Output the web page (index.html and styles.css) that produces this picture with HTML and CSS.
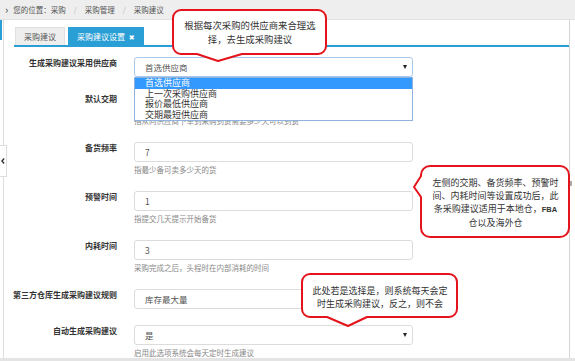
FILE: index.html
```html
<!DOCTYPE html>
<html lang="zh-CN">
<head>
<meta charset="UTF-8">
<meta name="viewport" content="width=device-width, initial-scale=1.0">
<title>采购建议设置</title>
<link rel="stylesheet" href="styles.css">
</head>
<body>

<div class="crumbs">
  <span class="crumb-arrow">›</span>
  <span>您的位置：</span><span>采购</span><span class="sep">/</span><span>采购管理</span><span class="sep">/</span><span>采购建议</span>
</div>

<div class="main">
  <div class="side"><div class="side-mark"></div></div>
  <div class="panel">
    <div class="tabs">
      <div class="tab">采购建议</div>
      <div class="tab tab-active">采购建议设置 <span class="tab-close">✖</span></div>
    </div>

    <div class="form">
      <div class="row">
        <div class="label">生成采购建议采用供应商</div>
        <div class="field field-open">
          <div class="control select focused">首选供应商<span class="caret"></span></div>
          <ul class="dropdown">
            <li class="selected">首选供应商</li>
            <li>上一次采购供应商</li>
            <li>报价最低供应商</li>
            <li>交期最短供应商</li>
          </ul>
        </div>
      </div>
      <div class="row">
        <div class="label">默认交期</div>
        <div class="field">
          <div class="control">15</div>
          <div class="help">指从向供应商下单到采购到货需要多少天可以到货</div>
        </div>
      </div>
      <div class="row">
        <div class="label">备货频率</div>
        <div class="field">
          <div class="control">7</div>
          <div class="help">指最少备可卖多少天的货</div>
        </div>
      </div>
      <div class="row">
        <div class="label">预警时间</div>
        <div class="field">
          <div class="control">1</div>
          <div class="help">指提交几天提示开始备货</div>
        </div>
      </div>
      <div class="row">
        <div class="label">内耗时间</div>
        <div class="field">
          <div class="control">3</div>
          <div class="help">采购完成之后，头程时在内部消耗的时间</div>
        </div>
      </div>
      <div class="row">
        <div class="label">第三方仓库生成采购建议规则</div>
        <div class="field">
          <div class="control select">库存最大量<span class="caret"></span></div>
        </div>
      </div>
      <div class="row">
        <div class="label">自动生成采购建议</div>
        <div class="field">
          <div class="control select">是<span class="caret"></span></div>
          <div class="help">启用此选项系统会每天定时生成建议</div>
        </div>
      </div>
    </div>
  </div>
</div>
<div class="footer-bar"></div>

<!-- 侧栏收起按钮 -->
<div class="collapse">
  <svg width="4" height="6" viewBox="0 0 4 6"><polyline points="3.2,0.6 0.9,3 3.2,5.4" fill="none" stroke="#333" stroke-width="1.4"/></svg>
</div>
<div class="scroll-mark"></div>

<!-- 说明气泡 -->
<div class="callout callout-top">
  <svg class="callout-shape" width="158" height="56" viewBox="0 0 158 56">
    <path d="M10,2 H147 A8,8 0 0 1 155,10 V38 A8,8 0 0 1 147,46 H71 L47,53 L26,46 H10 A8,8 0 0 1 2,38 V10 A8,8 0 0 1 10,2 Z"/>
  </svg>
  <div class="callout-text"><p>根据每次采购的供应商来合理选<br>择，去生成采购建议</p></div>
</div>

<div class="callout callout-right">
  <svg class="callout-shape" width="160" height="76" viewBox="0 0 160 76">
    <path d="M18,2 H148 A9,9 0 0 1 157,11 V64 A9,9 0 0 1 148,73 H18 A9,9 0 0 1 9,64 V33 L2,23 L9,12 V11 A9,9 0 0 1 18,2 Z"/>
  </svg>
  <div class="callout-text"><p>左侧的交期、备货频率、预警时<br>间、内耗时间等设置成功后，此<br>条采购建议适用于本地仓，<span class="latin">FBA</span><br>仓以及海外仓</p></div>
</div>

<div class="callout callout-bottom">
  <svg class="callout-shape" width="160" height="57" viewBox="0 0 160 57">
    <path d="M10,2 H149 A8,8 0 0 1 157,10 V37 A8,8 0 0 1 149,45 H67 L48,54 L27,45 H10 A8,8 0 0 1 2,37 V10 A8,8 0 0 1 10,2 Z"/>
  </svg>
  <div class="callout-text"><p>此处若是选择是，则系统每天会定<br>时生成采购建议，反之，则不会</p></div>
</div>

</body>
</html>
```

FILE: styles.css
```css
html, body {
  overflow: hidden;
}
body {
  margin: 0;
  width: 575px;
  height: 361px;
  position: relative;
  font-family: "Noto Sans CJK SC", "Noto Sans", sans-serif;
  background: #fff;
  color: #333;
}

/* 顶部位置栏 */
.crumbs {
  height: 19px;
  border-bottom: 1px solid #e2e2e2;
  background: #eeeeee;
  display: flex;
  align-items: center;
  padding-left: 5px;
  font-size: 7.5px;
  color: #555;
}
.crumb-arrow {
  font-size: 11px;
  line-height: 1;
  margin-right: 5px;
  color: #444;
}
.crumbs .sep {
  padding: 0 8px;
  color: #bbb;
}

.main {
  display: flex;
  height: 338px;
}
.side {
  width: 3px;
  border-right: 1px solid #dedede;
}
.side-mark {
  width: 2px;
  height: 20px;
  background: #2a9fd6;
}
.panel {
  width: 565px;
  border-right: 1px solid #d6d6d6;
}
.footer-bar {
  height: 3px;
  background: #e4e4e4;
}

/* 标签页 */
.tabs {
  display: flex;
  gap: 3px;
  margin: 7px 0 0 10px;
  padding-left: 1px;
  border-bottom: 2px solid #2a9fd6;
}
.tab {
  height: 18px;
  box-sizing: border-box;
  padding: 0 8px;
  line-height: 17px;
  font-size: 8px;
  color: #555;
  background: #eeeeee;
  border: 1px solid #e0e0e0;
  border-bottom: none;
}
.tab-active {
  background: #2a9fd6;
  border-color: #2a9fd6;
  color: #fff;
}
.tab-close {
  font-family: "DejaVu Sans", sans-serif;
  font-size: 7px;
  margin-left: 2px;
}

/* 表单 */
.form {
  display: flex;
  flex-direction: column;
  gap: 16px;
  padding-top: 10px;
}
.row {
  display: grid;
  grid-template-columns: 113px 279px;
  column-gap: 17px;
}
.label {
  text-align: right;
  font-size: 8px;
  font-weight: bold;
  line-height: 12px;
  color: #333;
}
.field {
  position: relative;
}
.field-open {
  z-index: 5;
}
.control {
  height: 20px;
  box-sizing: border-box;
  border: 1px solid #dcdcdc;
  border-radius: 3px;
  padding: 0 5px 0 10px;
  display: flex;
  align-items: center;
  justify-content: space-between;
  font-size: 8.5px;
  color: #555;
}
.control.focused {
  border-color: #a9c9ec;
}
.caret {
  width: 0;
  height: 0;
  border-left: 2.5px solid transparent;
  border-right: 2.5px solid transparent;
  border-top: 4px solid #222;
}
.help {
  margin-top: 3px;
  font-size: 7.5px;
  line-height: 10px;
  color: #888;
}
.dropdown {  /* 展开的下拉选项 */
  position: absolute;
  top: 20px;
  left: 0;
  right: 0;
  margin: 0;
  padding: 0;
  list-style: none;
  background: #fff;
  border: 1px solid #8fb3de;
  font-size: 9px;
  line-height: 10.5px;
  color: #333;
}
.dropdown li {
  padding-left: 10px;
}
.dropdown li.selected {
  background: #3399ff;
  color: #fff;
}

/* 侧栏收起按钮 */
.collapse {
  position: absolute;
  left: 0;
  top: 145px;
  width: 7px;
  height: 32px;
  box-sizing: border-box;
  background: #fff;
  border: 1px solid #dcdcdc;
  border-left: none;
  display: flex;
  align-items: center;
  justify-content: center;
}
.collapse svg {
  display: block;
}
.scroll-mark {
  position: absolute;
  left: 568px;
  top: 181px;
  width: 4px;
  height: 5px;
  background: #aaa;
}

/* 说明气泡 */
.callout {
  position: absolute;
  z-index: 10;
}
.callout-shape {
  position: absolute;
  left: 0;
  top: 0;
}
.callout-shape path {
  fill: #fff;
  stroke: #e5141c;
  stroke-width: 2;
  stroke-linejoin: round;
}
.callout-text {
  position: relative;
  display: flex;
  align-items: center;
  justify-content: center;
  text-align: center;
  font-size: 9px;
  line-height: 13px;
  color: #333;
}
.callout-text p {
  margin: 0;
}
.callout-text .latin {
  font-family: "Liberation Sans", sans-serif;
  font-size: 7.5px;
  font-weight: bold;
}
.callout-top {
  left: 171px;
  top: 8px;
  width: 158px;
  height: 56px;
}
.callout-top .callout-text {
  height: 48px;
  font-size: 9.4px;
  line-height: 14px;
}
.callout-right {
  left: 412px;
  top: 164px;
  width: 160px;
  height: 76px;
}
.callout-right .callout-text {
  margin-left: 9px;
  width: 149px;
  height: 77px;
}
.callout-bottom {
  left: 300px;
  top: 272px;
  width: 160px;
  height: 57px;
}
.callout-bottom .callout-text {
  height: 50px;
}
```
